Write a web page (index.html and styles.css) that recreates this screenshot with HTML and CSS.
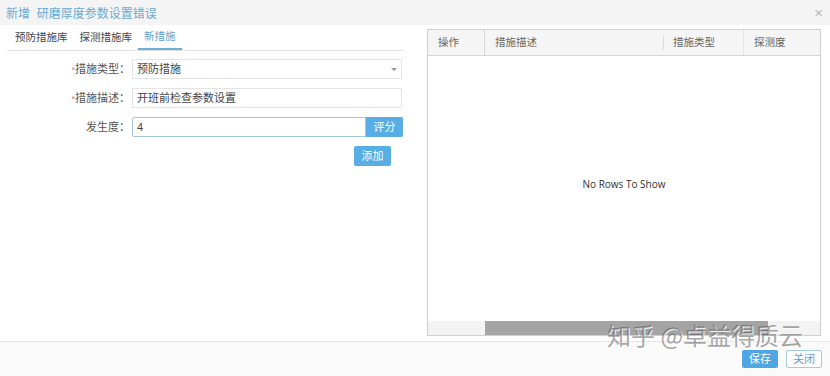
FILE: index.html
```html
<!DOCTYPE html>
<html lang="zh-CN">

<head>
  <meta charset="UTF-8">
  <meta name="viewport" content="width=device-width, initial-scale=1.0">
  <title>新增</title>
  <link rel="stylesheet" href="styles.css">
</head>

<body>
  <div class="dialog">
    <div class="dialog-head">
      <span class="dialog-title">新增&nbsp; 研磨厚度参数设置错误</span>
      <span class="dialog-close">×</span>
    </div>

    <div class="dialog-body">
      <div class="left">
        <ul class="tabs">
          <li>预防措施库</li>
          <li>探测措施库</li>
          <li class="active">新措施</li>
        </ul>

        <div class="form">
          <div class="row">
            <label><i>*</i>措施类型：</label>
            <div class="field select">
              <span>预防措施</span>
              <b class="caret"></b>
            </div>
          </div>
          <div class="row">
            <label><i>*</i>措施描述：</label>
            <div class="field">开班前检查参数设置</div>
          </div>
          <div class="row">
            <label>发生度：</label>
            <div class="field focus">4</div>
            <span class="btn btn-attach">评分</span>
          </div>
          <div class="row row-end">
            <span class="btn">添加</span>
          </div>
        </div>
      </div>

      <div class="grid">
        <div class="grid-head">
          <div class="col col-op">操作</div>
          <div class="col col-desc">措施描述</div>
          <div class="col col-type">措施类型</div>
          <div class="col col-det">探测度</div>
        </div>
        <div class="grid-rows">No Rows To Show</div>
        <div class="grid-scroll">
          <div class="thumb"></div>
        </div>
      </div>
    </div>

    <div class="dialog-foot">
      <span class="btn">保存</span>
      <span class="btn btn-line">关闭</span>
    </div>

    <div class="mark">知乎 @卓益得质云</div>
  </div>
</body>

</html>
```

FILE: styles.css
```css
* {
  margin: 0;
  padding: 0;
  box-sizing: border-box;
}

ul {
  list-style: none
}

body {
  font-family: "Liberation Sans", "Noto Sans CJK SC", sans-serif;
  font-size: 11px;
  color: #555;
  background-color: #fff;
}

.dialog {
  width: 830px;
  height: 376px;
  display: flex;
  flex-direction: column;
  position: relative;
  overflow: hidden;
}

.dialog-head {
  height: 25px;
  padding: 0 6px;
  display: flex;
  align-items: center;
  justify-content: space-between;
  background-color: #f4f4f4;
}

.dialog-title {
  font-size: 12px;
  color: #6aa9d4;
}

.dialog-close {
  font-size: 15px;
  color: #b5b5b5;
  margin-right: 1px;
}

.dialog-body {
  flex: 1;
  display: flex;
  background-color: #fff;
}

.left {
  width: 396px;
  margin-left: 7px;
}

.tabs {
  display: flex;
  height: 26px;
  padding-left: 2px;
  border-bottom: 1px solid #dedede;
}

.tabs li {
  padding: 0 6px;
  font-size: 10.5px;
  line-height: 25px;
  color: #444;
}

.tabs li.active {
  color: #5ea2d2;
  border-bottom: 2px solid #6aaed8;
  line-height: 23px;
}

.form {
  margin-top: 8px;
}

.row {
  display: flex;
  height: 20px;
  margin-bottom: 9px;
}

.row label {
  width: 125px;
  padding-right: 2px;
  text-align: right;
  line-height: 20px;
  color: #555;
}

.row label i {
  font-style: normal;
  color: #e07070;
  font-size: 9px;
}

.field {
  width: 270px;
  height: 20px;
  padding-left: 4px;
  border: 1px solid #e4e4e4;
  line-height: 18px;
  color: #444;
}

.select {
  display: flex;
  justify-content: space-between;
  align-items: center;
  padding-right: 4px;
}

.caret {
  width: 0;
  height: 0;
  border-left: 3px solid transparent;
  border-right: 3px solid transparent;
  border-top: 3px solid #999;
}

.focus {
  width: 234px;
  border-color: #a6c6da;
  border-radius: 2px 0 0 2px;
}

.btn {
  display: inline-block;
  width: 37px;
  height: 20px;
  line-height: 20px;
  text-align: center;
  color: #fff;
  background-color: #58ade5;
  border-radius: 2px;
}

.btn-attach {
  border-radius: 0 2px 2px 0;
}

.row-end {
  justify-content: flex-end;
  padding-right: 12px;
}

.grid {
  width: 394px;
  height: 307px;
  margin: 4px 0 0 24px;
  border: 1px solid #cfcfcf;
  display: flex;
  flex-direction: column;
}

.grid-head {
  display: flex;
  height: 26px;
  background-color: #f5f5f5;
  border-bottom: 1px solid #d6d6d6;
}

.grid-head .col {
  padding-left: 10px;
  line-height: 25px;
  color: #666;
  font-size: 10.5px;
}

.col-op {
  width: 57px;
  border-right: 1px solid #d6d6d6;
}

.col-desc {
  width: 178px;
}

.col-type {
  width: 80px;
  position: relative;
}

.col-type::before {
  content: "";
  position: absolute;
  left: 0;
  top: 5px;
  bottom: 5px;
  border-left: 1px solid #dcdcdc;
}

.col-det {
  flex: 1;
  border-left: 1px solid #e4e4e4;
}

.grid-rows {
  flex: 1;
  display: flex;
  align-items: center;
  justify-content: center;
  padding-bottom: 10px;
  font-family: "Open Sans", sans-serif;
  font-size: 10px;
  color: #333;
}

.grid-scroll {
  height: 14px;
  background-color: #f3f3f3;
  padding-left: 57px;
}

.thumb {
  width: 283px;
  height: 14px;
  background-color: #a4a4a4;
}

.dialog-foot {
  height: 35px;
  border-top: 1px solid #e6e6e6;
  background-color: #fafafa;
  display: flex;
  justify-content: flex-end;
  gap: 8px;
  padding: 8px 8px 0 0;
}

.dialog-foot .btn {
  width: 36px;
  height: 18px;
  line-height: 18px;
  background-color: #4ea6e2;
}

.dialog-foot .btn-line {
  background-color: #fff;
  color: #5ea2d2;
  border: 1px solid #a8cbd8;
  line-height: 16px;
}

.mark {
  position: absolute;
  left: 607px;
  top: 321px;
  font-size: 24px;
  line-height: 28px;
  color: rgba(80, 80, 80, 0.5);
  text-shadow: 1px 1px 0 rgba(255, 255, 255, 0.8);
  font-family: "Noto Sans CJK SC", sans-serif;
  white-space: nowrap;
}
```
